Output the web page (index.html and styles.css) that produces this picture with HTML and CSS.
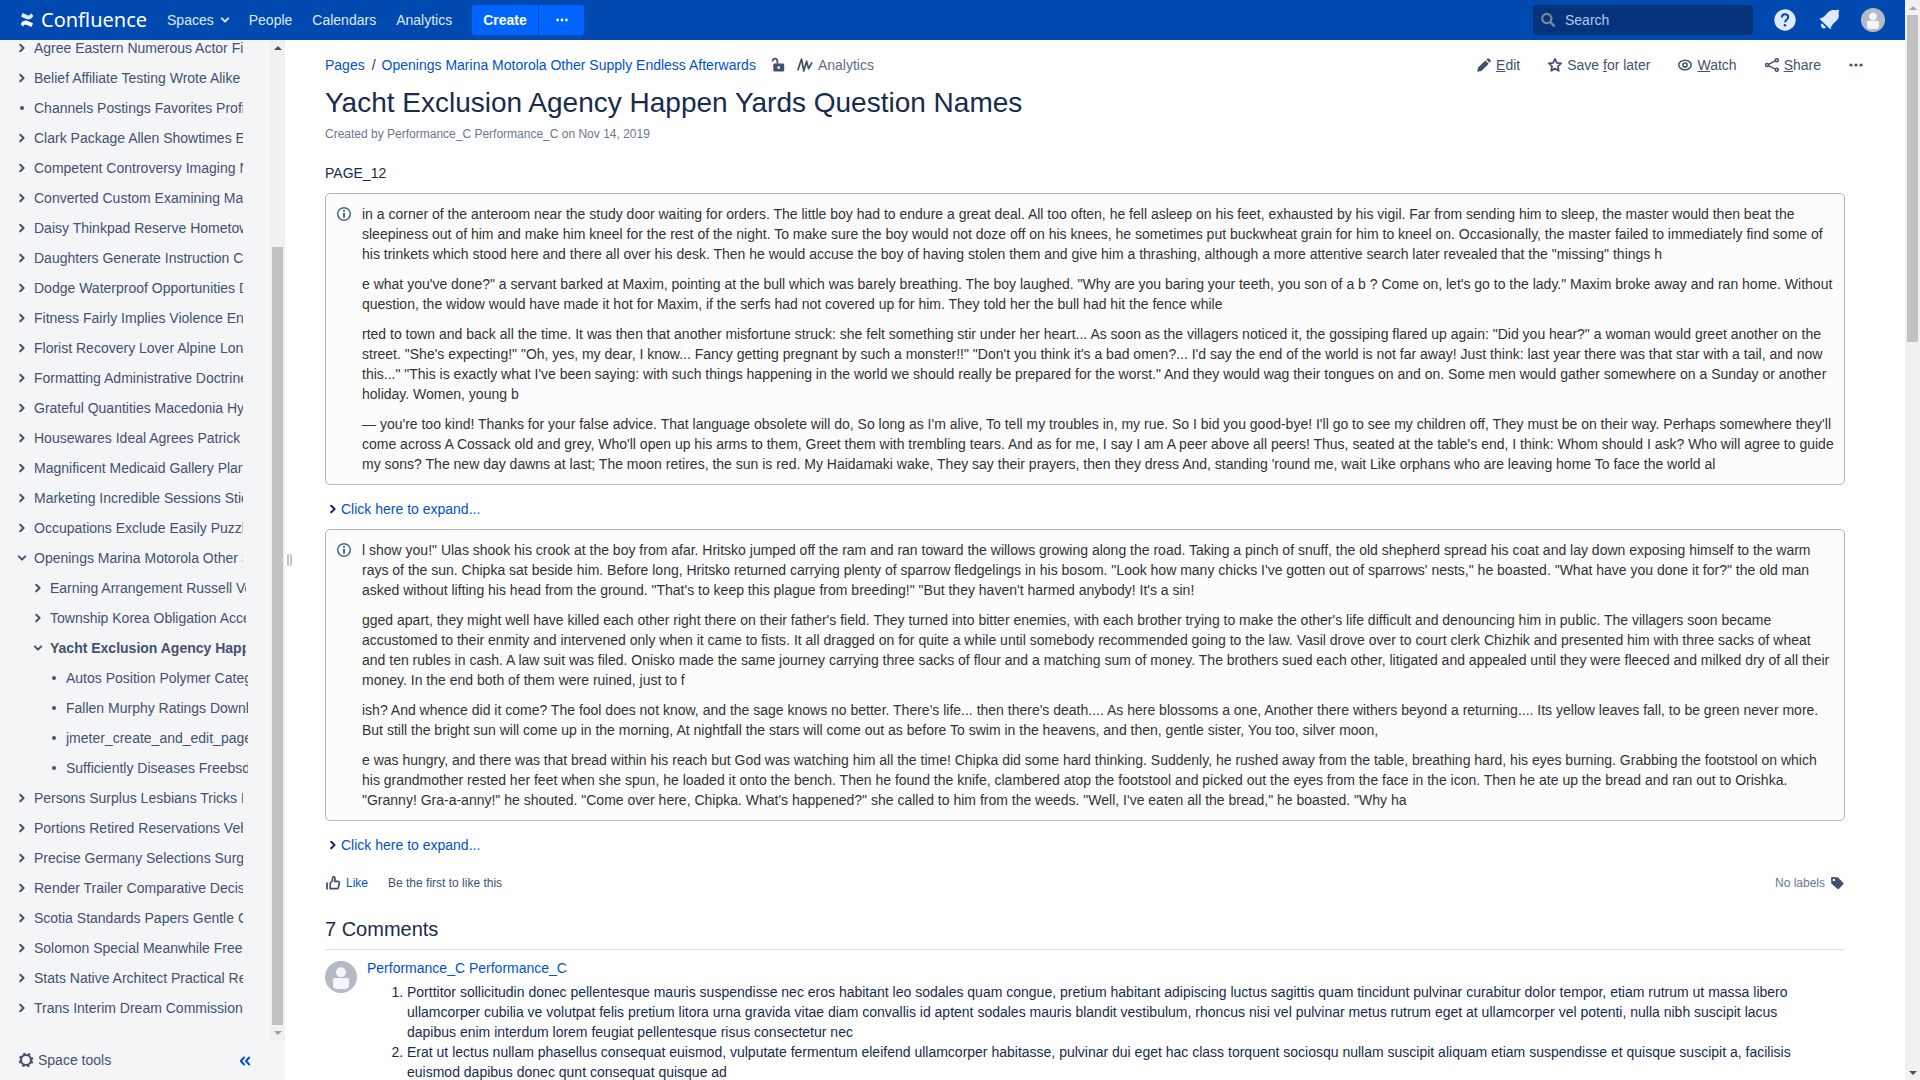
FILE: index.html
```html
<!DOCTYPE html>
<html lang="en">
<head>
<meta charset="utf-8">
<title>Yacht Exclusion Agency Happen Yards Question Names - Confluence</title>
<link rel="stylesheet" href="styles.css">
</head>
<body>
<svg class="sprite" aria-hidden="true">
  <symbol id="right" viewBox="0 0 16 16"><path d="M6.2 4.8 9.6 8l-3.4 3.2" fill="none" stroke="currentColor" stroke-width="2" stroke-linecap="round" stroke-linejoin="round"/></symbol>
  <symbol id="down" viewBox="0 0 16 16"><path d="M4.8 6.4 8 9.6l3.2-3.2" fill="none" stroke="currentColor" stroke-width="2" stroke-linecap="round" stroke-linejoin="round"/></symbol>
  <symbol id="dot" viewBox="0 0 16 16"><circle cx="8" cy="8" r="2" fill="currentColor"/></symbol>
  <symbol id="more" viewBox="0 0 16 16"><g fill="currentColor"><circle cx="3" cy="8" r="1.6"/><circle cx="8" cy="8" r="1.6"/><circle cx="13" cy="8" r="1.6"/></g></symbol>
  <symbol id="person" viewBox="0 0 32 32"><circle cx="16" cy="16" r="16" fill="#b3bac5"/><circle cx="16" cy="11.3" r="5" fill="#f4f5f7"/><path d="M8 18.5a1.5 1.5 0 0 1 1.500-1.500h13a1.500 1.500 0 0 1 1.500 1.500V24a4 4 0 0 1-4 4h-8a4 4 0 0 1-4-4z" fill="#f4f5f7"/></symbol>
  <symbol id="info" viewBox="0 0 16 16"><circle cx="8" cy="8" r="6.300" fill="none" stroke="currentColor" stroke-width="1.500"/><circle cx="8" cy="5" r="1.100" fill="currentColor"/><rect x="7" y="7" width="2" height="4.600" fill="currentColor"/></symbol>
</svg>
<div class="window">
  <div class="app">
    <header class="topbar">
      <a class="logo" href="#">
        <svg width="16" height="16" viewBox="0 0 14 16" aria-hidden="true"><path d="M.7 12.200c.8-1.400 2-3.700 4.700-3.700 2.100 0 4.200 1.400 7.600 3L11.400 15C8 13.500 6.700 12.600 5.300 12.600c-1 0-1.500.9-2.300 2.200z" fill="#fff"/><path d="M13.300 3.800c-.8 1.400-2 3.700-4.700 3.700C6.500 7.500 4.400 6.100 1 4.500L2.600 1C6 2.500 7.300 3.400 8.700 3.400c1 0 1.500-.9 2.300-2.200z" fill="#deebff"/></svg>
        <span>Confluence</span>
      </a>
      <nav class="topnav">
        <a href="#">Spaces<svg class="i16" aria-hidden="true"><use href="#down"/></svg></a>
        <a href="#">People</a>
        <a href="#">Calendars</a>
        <a href="#">Analytics</a>
      </nav>
      <div class="create">
        <button type="button">Create</button>
        <button type="button" aria-label="Create from template"><svg class="i14" aria-hidden="true"><use href="#more"/></svg></button>
      </div>
      <label class="search">
        <svg class="i16" viewBox="0 0 16 16" aria-hidden="true"><circle cx="6.800" cy="6.500" r="4.600" fill="none" stroke="currentColor" stroke-width="2.200"/><path d="m10.400 10.200 3.600 3.600" stroke="currentColor" stroke-width="2.400" stroke-linecap="round"/></svg>
        <input type="search" placeholder="Search" aria-label="Search">
      </label>
      <div class="tools">
        <a href="#" aria-label="Help"><svg class="i24" viewBox="0 0 24 24" aria-hidden="true"><circle cx="12" cy="12" r="10.700" fill="#deebff"/><path d="M8.900 9.600C8.900 7.600 10.200 6.300 12 6.300s3.200 1.200 3.200 3c0 2.300-3.100 2.500-3.100 4.900" fill="none" stroke="#0049b0" stroke-width="2"/><circle cx="12" cy="17.200" r="1.300" fill="#0049b0"/></svg></a>
        <a href="#" aria-label="Notifications"><svg class="i24" viewBox="0 0 24 24" aria-hidden="true"><path d="M2.300 10.800c4.500-1.300 6-3.700 8.800-6.600 2.600-2.500 5.400-2.400 8.300-1.900l1.600-.8 1.200 1.200-.7 1.700c.6 2.900.7 5.700-1.800 8.200-2.900 2.800-5.300 4.400-6.100 8.900z" fill="#deebff"/><path d="M4.900 15.300 9 19.400a2.700 2.700 0 0 1-4.100-4.100z" fill="#deebff"/></svg></a>
        <a href="#" aria-label="Profile"><svg class="i24" aria-hidden="true"><use href="#person"/></svg></a>
      </div>
    </header>
    <div class="body">
      <aside class="sidebar">
        <div class="scroller">
          <ul class="tree">
            <li class="l1"><svg class="i16" aria-hidden="true"><use href="#right"/></svg><a href="#">Agree Eastern Numerous Actor Fit</a></li>
            <li class="l1"><svg class="i16" aria-hidden="true"><use href="#right"/></svg><a href="#">Belief Affiliate Testing Wrote Alike</a></li>
            <li class="l1"><svg class="i16" aria-hidden="true"><use href="#dot"/></svg><a href="#">Channels Postings Favorites Profile</a></li>
            <li class="l1"><svg class="i16" aria-hidden="true"><use href="#right"/></svg><a href="#">Clark Package Allen Showtimes E</a></li>
            <li class="l1"><svg class="i16" aria-hidden="true"><use href="#right"/></svg><a href="#">Competent Controversy Imaging N</a></li>
            <li class="l1"><svg class="i16" aria-hidden="true"><use href="#right"/></svg><a href="#">Converted Custom Examining Ma</a></li>
            <li class="l1"><svg class="i16" aria-hidden="true"><use href="#right"/></svg><a href="#">Daisy Thinkpad Reserve Hometown</a></li>
            <li class="l1"><svg class="i16" aria-hidden="true"><use href="#right"/></svg><a href="#">Daughters Generate Instruction C</a></li>
            <li class="l1"><svg class="i16" aria-hidden="true"><use href="#right"/></svg><a href="#">Dodge Waterproof Opportunities D</a></li>
            <li class="l1"><svg class="i16" aria-hidden="true"><use href="#right"/></svg><a href="#">Fitness Fairly Implies Violence En</a></li>
            <li class="l1"><svg class="i16" aria-hidden="true"><use href="#right"/></svg><a href="#">Florist Recovery Lover Alpine Lon</a></li>
            <li class="l1"><svg class="i16" aria-hidden="true"><use href="#right"/></svg><a href="#">Formatting Administrative Doctrine</a></li>
            <li class="l1"><svg class="i16" aria-hidden="true"><use href="#right"/></svg><a href="#">Grateful Quantities Macedonia Hy</a></li>
            <li class="l1"><svg class="i16" aria-hidden="true"><use href="#right"/></svg><a href="#">Housewares Ideal Agrees Patrick</a></li>
            <li class="l1"><svg class="i16" aria-hidden="true"><use href="#right"/></svg><a href="#">Magnificent Medicaid Gallery Plan</a></li>
            <li class="l1"><svg class="i16" aria-hidden="true"><use href="#right"/></svg><a href="#">Marketing Incredible Sessions Stic</a></li>
            <li class="l1"><svg class="i16" aria-hidden="true"><use href="#right"/></svg><a href="#">Occupations Exclude Easily Puzzle</a></li>
            <li class="l1"><svg class="i16" aria-hidden="true"><use href="#down"/></svg><a href="#">Openings Marina Motorola Other Supply</a></li>
            <li class="l2"><svg class="i16" aria-hidden="true"><use href="#right"/></svg><a href="#">Earning Arrangement Russell Vo</a></li>
            <li class="l2"><svg class="i16" aria-hidden="true"><use href="#right"/></svg><a href="#">Township Korea Obligation Access</a></li>
            <li class="l2 current"><svg class="i16" aria-hidden="true"><use href="#down"/></svg><a href="#">Yacht Exclusion Agency Happen</a></li>
            <li class="l3"><svg class="i16" aria-hidden="true"><use href="#dot"/></svg><a href="#">Autos Position Polymer Categories</a></li>
            <li class="l3"><svg class="i16" aria-hidden="true"><use href="#dot"/></svg><a href="#">Fallen Murphy Ratings Download</a></li>
            <li class="l3"><svg class="i16" aria-hidden="true"><use href="#dot"/></svg><a href="#">jmeter_create_and_edit_page</a></li>
            <li class="l3"><svg class="i16" aria-hidden="true"><use href="#dot"/></svg><a href="#">Sufficiently Diseases Freebsd</a></li>
            <li class="l1"><svg class="i16" aria-hidden="true"><use href="#right"/></svg><a href="#">Persons Surplus Lesbians Tricks P</a></li>
            <li class="l1"><svg class="i16" aria-hidden="true"><use href="#right"/></svg><a href="#">Portions Retired Reservations Veh</a></li>
            <li class="l1"><svg class="i16" aria-hidden="true"><use href="#right"/></svg><a href="#">Precise Germany Selections Surg</a></li>
            <li class="l1"><svg class="i16" aria-hidden="true"><use href="#right"/></svg><a href="#">Render Trailer Comparative Decis</a></li>
            <li class="l1"><svg class="i16" aria-hidden="true"><use href="#right"/></svg><a href="#">Scotia Standards Papers Gentle C</a></li>
            <li class="l1"><svg class="i16" aria-hidden="true"><use href="#right"/></svg><a href="#">Solomon Special Meanwhile Free</a></li>
            <li class="l1"><svg class="i16" aria-hidden="true"><use href="#right"/></svg><a href="#">Stats Native Architect Practical Re</a></li>
            <li class="l1"><svg class="i16" aria-hidden="true"><use href="#right"/></svg><a href="#">Trans Interim Dream Commission</a></li>
          </ul>
          <div class="scrollbar side" aria-hidden="true"><i class="up dark"></i><i class="before"></i><i class="thumb"></i><i class="after"></i><i class="dn"></i></div>
        </div>
        <div class="sidefoot">
          <a href="#"><svg class="i16" viewBox="0 0 16 16" aria-hidden="true"><circle cx="8" cy="8" r="5" fill="none" stroke="currentColor" stroke-width="2.200"/><circle cx="8" cy="8" r="6.400" fill="none" stroke="currentColor" stroke-width="1.800" stroke-dasharray="2.500 2.530" stroke-dashoffset="-1.200"/></svg>Space tools</a>
          <button type="button" aria-label="Collapse sidebar"><svg class="i16" viewBox="0 0 16 16" aria-hidden="true"><path d="M7 5.500 3.800 9 7 12.500M12.200 5.500 9 9l3.200 3.500" fill="none" stroke="currentColor" stroke-width="2" stroke-linecap="round" stroke-linejoin="round"/></svg></button>
        </div>
      </aside>
      <div class="splitter" aria-hidden="true"><i></i><i></i></div>
      <main class="content">
        <div class="headrow">
          <nav class="crumbs">
            <a href="#">Pages</a><span class="slash">/</span><a href="#">Openings Marina Motorola Other Supply Endless Afterwards</a>
            <a class="lock" href="#" aria-label="Unrestricted"><svg class="i16" viewBox="0 0 16 16" aria-hidden="true"><path fill-rule="evenodd" d="M4.500 6.500H13a1.200 1.200 0 0 1 1.200 1.200v5.600A1.200 1.200 0 0 1 13 14.500H4.500a1.200 1.200 0 0 1-1.200-1.200V7.700a1.200 1.200 0 0 1 1.200-1.200zm4.200 2.700a1.400 1.400 0 1 0 0 2.800 1.400 1.400 0 0 0 0-2.800z" fill="currentColor"/><path d="M2.700 4.500C2.700 2.700 3.700 1.700 5 1.700s2.400 1 2.400 2.800v2.200" fill="none" stroke="currentColor" stroke-width="1.700"/></svg></a>
            <a class="stats" href="#"><svg class="i16" viewBox="0 0 16 16" aria-hidden="true"><path d="M1 12.800 4.500 2l2.300 12L9.600 4.200l2 7.500L14.700 6" fill="none" stroke="currentColor" stroke-width="1.700" stroke-linecap="round" stroke-linejoin="round"/></svg>Analytics</a>
          </nav>
          <div class="actions">
            <a href="#"><svg class="i16" viewBox="0 0 16 16" aria-hidden="true"><path d="m1.200 14.800.8-4.200L9.400 3.400l3.300 3.300-7.300 7.300zM10.300 2.500l.8-.8a1.300 1.300 0 0 1 1.900 0l1.400 1.400a1.300 1.300 0 0 1 0 1.900l-.8.8z" fill="currentColor"/></svg><span><u>E</u>dit</span></a>
            <a href="#"><svg class="i16" viewBox="0 0 16 16" aria-hidden="true"><path d="m8 1.900 1.800 4 4.400.5-3.300 3 .9 4.400L8 11.600l-3.800 2.200.9-4.400-3.300-3 4.400-.5z" fill="none" stroke="currentColor" stroke-width="1.700" stroke-linejoin="round"/></svg><span>Save <u>f</u>or later</span></a>
            <a href="#"><svg class="i16" viewBox="0 0 16 16" aria-hidden="true"><ellipse cx="8" cy="8" rx="6.200" ry="4.800" fill="none" stroke="currentColor" stroke-width="1.500"/><circle cx="8" cy="8" r="2.100" fill="none" stroke="currentColor" stroke-width="1.500"/></svg><span><u>W</u>atch</span></a>
            <a href="#"><svg class="i16" viewBox="0 0 16 16" aria-hidden="true"><g fill="none" stroke="currentColor" stroke-width="1.500"><circle cx="3" cy="8" r="1.500"/><circle cx="12.800" cy="3.200" r="1.500"/><circle cx="12.800" cy="12.800" r="1.500"/><path d="m4.500 7.300 6.800-3.400M4.500 8.700l6.800 3.400"/></g></svg><span><u>S</u>hare</span></a>
            <a href="#" aria-label="More actions"><svg class="i16" aria-hidden="true"><use href="#more"/></svg></a>
          </div>
        </div>
        <h1>Yacht Exclusion Agency Happen Yards Question Names</h1>
        <p class="meta">Created by Performance_C Performance_C on Nov 14, 2019</p>
        <p class="pageid">PAGE_12</p>
        <section class="panel">
          <svg class="i16" aria-hidden="true"><use href="#info"/></svg>
          <div>
            <p>in a corner of the anteroom near the study door waiting for orders. The little boy had to endure a great deal. All too often, he fell asleep on his feet, exhausted by his vigil. Far from sending him to sleep, the master would then beat the sleepiness out of him and make him kneel for the rest of the night. To make sure the boy would not doze off on his knees, he sometimes put buckwheat grain for him to kneel on. Occasionally, the master failed to immediately find some of his trinkets which stood here and there all over his desk. Then he would accuse the boy of having stolen them and give him a thrashing, although a more attentive search later revealed that the "missing" things h</p>
            <p>e what you've done?" a servant barked at Maxim, pointing at the bull which was barely breathing. The boy laughed. "Why are you baring your teeth, you son of a b ? Come on, let's go to the lady." Maxim broke away and ran home. Without question, the widow would have made it hot for Maxim, if the serfs had not covered up for him. They told her the bull had hit the fence while</p>
            <p>rted to town and back all the time. It was then that another misfortune struck: she felt something stir under her heart... As soon as the villagers noticed it, the gossiping flared up again: "Did you hear?" a woman would greet another on the street. "She's expecting!" "Oh, yes, my dear, I know... Fancy getting pregnant by such a monster!!" "Don't you think it's a bad omen?... I'd say the end of the world is not far away! Just think: last year there was that star with a tail, and now this..." "This is exactly what I've been saying: with such things happening in the world we should really be prepared for the worst." And they would wag their tongues on and on. Some men would gather somewhere on a Sunday or another holiday. Women, young b</p>
            <p>— you're too kind! Thanks for your false advice. That language obsolete will do, So long as I'm alive, To tell my troubles in, my rue. So I bid you good-bye! I'll go to see my children off, They must be on their way. Perhaps somewhere they'll come across A Cossack old and grey, Who'll open up his arms to them, Greet them with trembling tears. And as for me, I say I am A peer above all peers! Thus, seated at the table's end, I think: Whom should I ask? Who will agree to guide my sons? The new day dawns at last; The moon retires, the sun is red. My Haidamaki wake, They say their prayers, then they dress And, standing 'round me, wait Like orphans who are leaving home To face the world al</p>
          </div>
        </section>
        <button type="button" class="expand"><svg class="i16" aria-hidden="true"><use href="#right"/></svg><span>Click here to expand...</span></button>
        <section class="panel">
          <svg class="i16" aria-hidden="true"><use href="#info"/></svg>
          <div>
            <p>l show you!" Ulas shook his crook at the boy from afar. Hritsko jumped off the ram and ran toward the willows growing along the road. Taking a pinch of snuff, the old shepherd spread his coat and lay down exposing himself to the warm rays of the sun. Chipka sat beside him. Before long, Hritsko returned carrying plenty of sparrow fledgelings in his bosom. "Look how many chicks I've gotten out of sparrows' nests," he boasted. "What have you done it for?" the old man asked without lifting his head from the ground. "That's to keep this plague from breeding!" "But they haven't harmed anybody! It's a sin!</p>
            <p>gged apart, they might well have killed each other right there on their father's field. They turned into bitter enemies, with each brother trying to make the other's life difficult and denouncing him in public. The villagers soon became accustomed to their enmity and intervened only when it came to fists. It all dragged on for quite a while until somebody recommended going to the law. Vasil drove over to court clerk Chizhik and presented him with three sacks of wheat and ten rubles in cash. A law suit was filed. Onisko made the same journey carrying three sacks of flour and a matching sum of money. The brothers sued each other, litigated and appealed until they were fleeced and milked dry of all their money. In the end both of them were ruined, just to f</p>
            <p>ish? And whence did it come? The fool does not know, and the sage knows no better. There's life... then there's death.... As here blossoms a one, Another there withers beyond a returning.... Its yellow leaves fall, to be green never more. But still the bright sun will come up in the morning, At nightfall the stars will come out as before To swim in the heavens, and then, gentle sister, You too, silver moon,</p>
            <p>e was hungry, and there was that bread within his reach but God was watching him all the time! Chipka did some hard thinking. Suddenly, he rushed away from the table, breathing hard, his eyes burning. Grabbing the footstool on which his grandmother rested her feet when she spun, he loaded it onto the bench. Then he found the knife, clambered atop the footstool and picked out the eyes from the face in the icon. Then he ate up the bread and ran out to Orishka. "Granny! Gra-a-anny!" he shouted. "Come over here, Chipka. What's happened?" she called to him from the weeds. "Well, I've eaten all the bread," he boasted. "Why ha</p>
          </div>
        </section>
        <button type="button" class="expand"><svg class="i16" aria-hidden="true"><use href="#right"/></svg><span>Click here to expand...</span></button>
        <div class="likes">
          <button type="button" class="like"><svg class="i16" viewBox="0 0 16 16" aria-hidden="true"><path d="M2 7.500v7" fill="none" stroke="currentColor" stroke-width="1.800"/><path d="M5.200 8.200 7.200 6l.5-3.500c.1-.9 2-.9 2.300.6.200 1-.2 2.300-.5 3.200h3.300c1 0 1.700.8 1.500 1.800l-.9 4.400c-.2.900-.8 1.200-1.500 1.200H5.200z" fill="none" stroke="currentColor" stroke-width="1.700" stroke-linejoin="round"/></svg><span>Like</span></button>
          <span>Be the first to like this</span>
          <span class="labels">No labels<svg class="i16" viewBox="0 0 16 16" aria-hidden="true"><path fill-rule="evenodd" d="M2 3.300A1.300 1.300 0 0 1 3.300 2l4.900.2c.4 0 .8.200 1.100.5l4.900 5c.5.500.5 1.300 0 1.800l-4.100 4.200c-.5.500-1.300.5-1.800 0L2.800 8.900a1.500 1.500 0 0 1-.5-1zm2.900.4a1.200 1.200 0 1 0 0 2.400 1.200 1.200 0 0 0 0-2.400z" fill="currentColor"/></svg></span>
        </div>
        <h2>7 Comments</h2>
        <article class="comment">
          <svg class="i32" aria-hidden="true"><use href="#person"/></svg>
          <div>
            <a href="#">Performance_C Performance_C</a>
            <ol>
              <li>Porttitor sollicitudin donec pellentesque mauris suspendisse nec eros habitant leo sodales quam congue, pretium habitant adipiscing luctus sagittis quam tincidunt pulvinar curabitur dolor tempor, etiam rutrum ut massa libero ullamcorper cubilia ve volutpat felis pretium litora urna gravida vitae diam convallis id aptent sodales mauris blandit vestibulum, rhoncus nisi vel pulvinar metus rutrum eget at ullamcorper vel potenti, nulla nibh suscipit lacus dapibus enim interdum lorem feugiat pellentesque risus consectetur nec</li>
              <li>Erat ut lectus nullam phasellus consequat euismod, vulputate fermentum eleifend ullamcorper habitasse, pulvinar dui eget hac class torquent sociosqu nullam suscipit aliquam etiam suspendisse et quisque suscipit a, facilisis euismod dapibus donec qunt consequat quisque ad</li>
            </ol>
          </div>
        </article>
      </main>
    </div>
  </div>
  <div class="scrollbar page" aria-hidden="true"><i class="up"></i><i class="thumb"></i><i class="after"></i><i class="dn dark"></i></div>
</div>
</body>
</html>
```
FILE: styles.css
```css
* { box-sizing: border-box; }
body { margin: 0; background: #fff; color: #172b4d; font: 14px/20px "Liberation Sans", Arial, sans-serif; overflow: hidden; }
a { color: #0052cc; text-decoration: none; }
button, input { font: inherit; color: inherit; border: 0; background: none; padding: 0; }
button { cursor: pointer; }
svg { flex: none; display: block; }
.sprite { position: absolute; width: 0; height: 0; }
.i14 { width: 14px; height: 14px; }
.i16 { width: 16px; height: 16px; }
.i24 { width: 24px; height: 24px; }
.i32 { width: 32px; height: 32px; }

.window { display: flex; height: 100vh; }
.app { flex: 1; min-width: 0; display: flex; flex-direction: column; }

/* header */
.topbar { flex: none; display: flex; align-items: center; height: 40px; padding: 0 20px 0 19px; background: #0049b0; color: #deebff; }
.logo { display: flex; align-items: center; gap: 6px; margin-right: 20px; color: #fff; font: 20px/24px "Noto Sans", sans-serif; }
.topnav { display: flex; gap: 20px; }
.topnav a { display: flex; align-items: center; gap: 3px; color: #deebff; }
.topnav a:first-child { margin-right: -4px; }
.create { display: flex; gap: 1px; margin-left: 20px; color: #fff; font-weight: bold; }
.create button { height: 30px; padding: 0 11px; background: #0065ff; border-radius: 3px 0 0 3px; }
.create button + button { padding: 0 15px 0 16px; border-radius: 0 3px 3px 0; }
.search { display: flex; align-items: center; gap: 9px; width: 220px; height: 30px; margin-left: auto; padding: 0 7px; border-radius: 3px; background: #05347c; color: #7a8699; }
.search input { flex: 1; min-width: 0; outline: 0; appearance: none; }
.search input::placeholder { color: #b3cbed; opacity: 1; }
.tools { display: flex; gap: 20px; margin-left: 20px; }

.body { flex: 1; min-height: 0; display: flex; }

/* sidebar */
.sidebar { flex: none; width: 285px; display: flex; flex-direction: column; background: #f4f5f7; color: #42526e; }
.scroller { flex: 1; min-height: 0; display: flex; justify-content: space-between; overflow: hidden; }
.tree { flex: none; align-self: flex-end; width: 248px; margin: 0; padding: 0 0 17px; list-style: none; }
.tree li { display: flex; align-items: center; gap: 4px; height: 30px; overflow: hidden; }
.tree a { flex: 1; min-width: 0; color: #42526e; white-space: nowrap; overflow: hidden; }
.l1 { padding: 0 5px 0 14px; }
.l2 { padding: 0 2px 0 30px; }
.l3 { padding-left: 46px; }
.current { font-weight: bold; }
.sidefoot { flex: none; display: flex; justify-content: space-between; align-items: center; height: 40px; padding: 0 32px 0 18px; }
.sidefoot a { display: flex; align-items: center; gap: 4px; color: #42526e; }
.sidefoot button { color: #0052cc; }

/* scrollbars */
.scrollbar { flex: none; display: flex; flex-direction: column; width: 15px; background: #f1f1f1; }
.scrollbar .up, .scrollbar .dn { flex: none; display: grid; place-items: center; height: 15px; color: #a3a3a3; }
.scrollbar .dark { color: #505050; }
.up::before, .dn::before { content: ""; border: 4px solid transparent; border-top-width: 0; border-bottom-color: currentColor; }
.dn::before { border-top: 4px solid currentColor; border-bottom: 0; }
.thumb { margin: 0 2px; background: #c1c1c1; }
.side .before { flex: 192; }
.side .thumb { flex: 778; }
.page .thumb { flex: 327; }
.page .after { flex: 723; }

.splitter { flex: none; display: flex; align-items: center; gap: 1px; width: 40px; padding-left: 2px; }
.splitter i { width: 2px; height: 12px; background: #c1c7d0; }

/* page */
.content { flex: 1; min-width: 0; padding: 15px 60px 0 0; overflow: hidden; }
.headrow { display: flex; justify-content: space-between; }
.crumbs, .crumbs a, .actions, .actions a { display: flex; align-items: center; }
.slash { padding: 0 6px 0 7px; }
.crumbs .lock { margin: 0 11px 0 14px; color: #42526e; }
.crumbs .stats { gap: 5px; color: #5e6c84; }
.stats svg { color: #42526e; }
.actions { gap: 27px; margin-right: -19px; }
.actions a { gap: 4px; color: #42526e; }
h1 { margin: 10px 0 0; font-size: 28px; line-height: 36px; font-weight: normal; }
.meta { margin: 3px 0 0; font-size: 12px; color: #6b778c; }
.pageid { margin: 19px 0 10px; }
.panel { display: flex; gap: 10px; padding: 10px; border: 1px solid #aab8c6; border-radius: 5px; background: #fcfcfc; color: #333; }
.panel > svg { margin-top: 2px; color: #4a6785; }
.panel p { margin: 0; }
.panel p + p { margin-top: 10px; }
.expand { display: flex; align-items: center; height: 44px; padding-top: 4px; color: #172b4d; }
.expand span { color: #0052cc; }
.likes { display: flex; align-items: center; gap: 20px; margin-top: 8px; font-size: 12px; color: #42526e; }
.like { display: flex; align-items: center; gap: 5px; }
.like span { color: #0052cc; }
.labels { display: flex; align-items: center; gap: 4px; margin-left: auto; color: #6b778c; }
.labels svg { color: #42526e; }
h2 { margin: 24px 0 10px; padding-bottom: 8px; border-bottom: 1px solid #dfe1e6; font-size: 20px; line-height: 24px; font-weight: normal; }
.comment { display: flex; gap: 10px; }
.comment > svg { margin-top: 1px; }
.comment > div { padding: 0 20px 0 0; }
.comment > div > a { display: block; margin-top: -2px; }
ol { margin: 4px 0 0; padding: 0 0 0 40px; }
```
